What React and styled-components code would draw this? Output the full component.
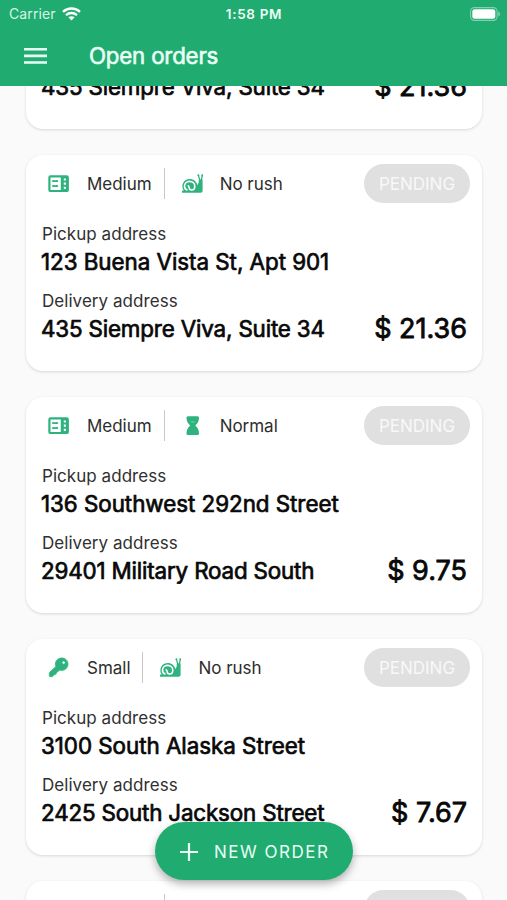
import React from "react";
import styled, { createGlobalStyle } from "styled-components";

const GlobalStyle = createGlobalStyle`
  * {
    box-sizing: border-box;
  }

  body {
    margin: 0;
    background: #fafafa;
    font-family: Inter, "Liberation Sans", sans-serif;
  }
`;

const Screen = styled.div`
  position: relative;
  display: flex;
  flex-direction: column;
  width: 100%;
  height: 900px;
  overflow: hidden;
  background: #fafafa;
`;

const Header = styled.header`
  flex: none;
  height: 86px;
  background: #20ab70;
  color: white;
`;

const StatusBar = styled.div`
  display: grid;
  grid-template-columns: 1fr auto 1fr;
  align-items: center;
  height: 27px;
  padding: 0 6px 0 9px;
`;

const Carrier = styled.div`
  display: flex;
  align-items: center;
  gap: 6px;
  font-size: 14px;
  letter-spacing: 0.1px;
  color: #d8f5e7;
`;

const Clock = styled.div`
  margin-right: 2px;
  font-size: 13.5px;
  font-weight: 600;
  letter-spacing: 0.65px;
  color: #eefff7;
`;

const Battery = styled.div`
  display: flex;
  justify-content: flex-end;
`;

const TitleBar = styled.div`
  display: flex;
  align-items: center;
  gap: 42px;
  height: 58px;
  padding-left: 24px;
`;

const Title = styled.h1`
  margin: 0;
  padding-bottom: 1px;
  line-height: 26px;
  font-size: 22.3px;
  font-weight: 400;
  letter-spacing: -0.2px;
  -webkit-text-stroke: 0.6px;
  color: #e9fff5;
`;

const ListViewport = styled.main`
  flex: 1;
  min-height: 0;
  overflow: hidden;
`;

const List = styled.div`
  display: flex;
  flex-direction: column;
  gap: 26px;
  margin-top: -173px;
  padding: 0 25px 0 26px;
`;

const Card = styled.article`
  flex: none;
  height: 216px;
  padding: 9px 12px 0 16px;
  border-radius: 17px;
  background: white;
  box-shadow: 0 1px 3px rgba(0, 0, 0, 0.14);
`;

const CardTop = styled.div`
  display: flex;
  align-items: center;
  height: 39px;
`;

const Tag = styled.div`
  display: flex;
  align-items: center;
  gap: ${(props) => (props.$divided ? "12px" : "13px")};
  padding-left: ${(props) => (props.$divided ? "12px" : "1px")};
  padding-right: 12px;
  height: 31px;
  border-left: ${(props) => (props.$divided ? "1.5px solid #c8c8c8" : "none")};
  font-size: 17px;
  letter-spacing: -0.02px;
  color: #2d2d2d;
`;

const Status = styled.div`
  display: flex;
  align-items: center;
  justify-content: center;
  width: 106px;
  height: 39px;
  margin-left: auto;
  border-radius: 20px;
  background: #e0e0e0;
  color: #f8f8f8;
  font-size: 17px;
`;

const CardBody = styled.div`
  display: flex;
  justify-content: space-between;
  align-items: flex-end;
  margin-top: 17px;
  padding-right: 3px;
`;

const Addresses = styled.div`
  display: flex;
  flex-direction: column;
  gap: 9px;
`;

const Label = styled.div`
  height: 28px;
  line-height: 28px;
  font-size: 17px;
  letter-spacing: 0.05px;
  color: #303030;
`;

const Value = styled.div`
  height: 30px;
  margin-left: -1px;
  line-height: 28px;
  font-size: 22.4px;
  font-weight: 400;
  letter-spacing: ${(props) => (props.$tight ? "-0.17px" : "-0.04px")};
  -webkit-text-stroke: 0.7px;
  color: #080808;
  white-space: nowrap;
`;

const Price = styled.div`
  line-height: 32px;
  font-size: 27px;
  font-weight: 400;
  -webkit-text-stroke: 0.8px;
  color: #080808;
  white-space: nowrap;
`;

const NewOrder = styled.button`
  position: absolute;
  left: 155px;
  bottom: 20px;
  display: flex;
  align-items: center;
  gap: 16px;
  width: 198px;
  height: 58px;
  padding: 1px 0 0 25px;
  border: 0;
  border-radius: 29px;
  background: #20ab70;
  box-shadow: 0 4px 8px rgba(0, 0, 0, 0.3);
  color: #e9fff5;
  font-family: inherit;
  font-size: 17px;
  letter-spacing: 1.5px;
  white-space: nowrap;
`;

const Icon = styled.svg`
  flex: none;
  display: block;
`;

const WifiIcon = () => (
  <Icon width="19" height="14" viewBox="0 0 19 14" fill="none" stroke="white">
    <path d="M1 4.8C5.8.4 13.2.4 18 4.8" strokeWidth="2.4" />
    <path d="M4 8.1c3.2-2.8 7.8-2.8 11 0" strokeWidth="2.3" />
    <path d="M6.4 10.3c1.900-1.500 4.300-1.500 6.200 0L9.500 13.500z" fill="white" stroke="none" />
  </Icon>
);

const BatteryIcon = () => (
  <Icon width="31" height="14" viewBox="0 0 31 14">
    <rect x=".6" y=".6" width="26.5" height="12.8" rx="3.8" fill="none" stroke="#83d1ae" strokeWidth="1.1" />
    <rect x="2.3" y="2.3" width="23" height="9.4" rx="2.3" fill="white" />
    <path d="M28.3 4.6c2.400.8 2.400 4 0 4.800z" fill="#83d1ae" />
  </Icon>
);

const MenuIcon = () => (
  <Icon width="23" height="16" viewBox="0 0 23 16" fill="#e9fff5">
    <path d="M0 0h23v2.6H0zM0 6.6h23v2.6H0zM0 13.2h23v2.6H0z" />
  </Icon>
);

const MicrowaveIcon = () => (
  <Icon width="31" height="26" viewBox="0 0 31 26">
    <path
      fill="#2fb37e"
      fillRule="evenodd"
      d="M7.5 4.3h16.2a2.2 2.2 0 0 1 2.2 2.2v12.4a2.2 2.2 0 0 1-2.2 2.2H7.5a2.2 2.2 0 0 1-2.2-2.2V6.5a2.2 2.2 0 0 1 2.2-2.2zm0 2.1V19h10.3V6.4zm13.3 1v2.1h2.1V7.4zm0 4.2v2.1h2.1v-2.1zm0 4.2v2.1h2.1v-2.1z"
    />
    <path
      d="M9.300 10.600c1.700-2 3.200.8 5.600-1.100M9.300 15.600c1.700-2 3.200.8 5.600-1.100"
      fill="none"
      stroke="#2fb37e"
      strokeWidth="1.8"
    />
  </Icon>
);

const SnailIcon = () => (
  <Icon width="31" height="26" viewBox="0 0 31 26" fill="none" stroke="#2fb37e">
    <path
      d="M5 21.800v-2.200h2.100C5.800 18.500 5.400 17 5.400 15.400c0-4.200 3.200-7.300 7.300-7.300 4 0 7 2.700 7.600 6.100l1.400-2.700V10c0-.9.500-1.400 1.400-1.400h2.500v11.200c0 1.200-.8 2-2 2z"
      fill="#2fb37e"
      stroke="none"
    />
    <path d="M22.800 9.300l-1.200-4.500M24.200 9.300l1-4.500" strokeWidth="1.3" />
    <circle cx="21.400" cy="4.300" r="1" fill="#2fb37e" stroke="none" />
    <circle cx="25.200" cy="4.300" r="1" fill="#2fb37e" stroke="none" />
    <path
      d="M10.500 19.200c-2-.5-3-2-3-3.900 0-2.900 2.200-4.900 5.100-4.900 3.100 0 5.200 2.200 5.200 4.800 0 2.300-1.300 3.800-3.100 3.800-1.700 0-2.500-1.100-2.500-2.200 0-1.100-.3-1.900-1.500-2.400"
      stroke="white"
      strokeWidth="1.6"
    />
  </Icon>
);

const HourglassIcon = () => (
  <Icon width="31" height="26" viewBox="0 0 31 26" fill="#2fb37e">
    <path d="M11.100 3.200h9.300c1.100 0 1.700.8 1.600 1.800-.3 3.500-1 4.900-3.700 7.600 2.700 2.700 3.400 4.200 3.700 7.600.1 1.100-.5 1.800-1.600 1.800h-9.300c-1.100 0-1.700-.7-1.600-1.800.3-3.400 1-4.900 3.700-7.600-2.700-2.700-3.400-4.100-3.700-7.600-.1-1 .5-1.800 1.600-1.800z" />
    <path d="M12.900 7.900h5.700c-.5.900-1.300 1.400-1.900 2.100h-1.900c-.6-.7-1.400-1.200-1.900-2.100z" fill="white" opacity=".2" />
  </Icon>
);

const KeyIcon = () => (
  <Icon width="31" height="26" viewBox="0 0 31 26" fill="#2fb37e">
    <path
      fillRule="evenodd"
      d="M18.700 3c3.600 0 6.300 2.700 6.300 6.100 0 3.600-2.800 6.300-6.300 6.300-.8 0-1.500-.1-2.200-.4l-1.500 1.700-1.400.4-.5 1.900-1.500.5-1.600 1.600c-.5.500-1 .7-1.700.7H7.700c-.9 0-1.400-.6-1.400-1.400v-1.900c0-.7.2-1.100.7-1.600l6-5.500c-.4-.7-.6-1.500-.6-2.300C12.400 5.700 15.200 3 18.700 3zm2 2.900a1.700 1.700 0 1 0 0 3.400 1.700 1.700 0 0 0 0-3.400z"
      stroke="#2fb37e"
      strokeWidth=".8"
    />
  </Icon>
);

const PlusIcon = () => (
  <Icon width="18" height="18" viewBox="0 0 18 18" stroke="#e9fff5" strokeWidth="2.2">
    <path d="M9 0v18M0 9h18" />
  </Icon>
);

const sizeIcons = { Medium: MicrowaveIcon, Small: KeyIcon };
const rushIcons = { "No rush": SnailIcon, Normal: HourglassIcon };

const orders = [
  {
    size: "Medium",
    rush: "No rush",
    pickup: "123 Buena Vista St, Apt 901",
    delivery: "435 Siempre Viva, Suite 34",
    price: "$ 21.36",
  },
  {
    size: "Medium",
    rush: "No rush",
    pickup: "123 Buena Vista St, Apt 901",
    delivery: "435 Siempre Viva, Suite 34",
    price: "$ 21.36",
  },
  {
    size: "Medium",
    rush: "Normal",
    pickup: "136 Southwest 292nd Street",
    delivery: "29401 Military Road South",
    price: "$ 9.75",
  },
  {
    size: "Small",
    rush: "No rush",
    pickup: "3100 South Alaska Street",
    delivery: "2425 South Jackson Street",
    price: "$ 7.67",
  },
  {
    size: "Medium",
    rush: "No rush",
    pickup: "",
    delivery: "",
    price: "",
  },
];

const Order = ({ order }) => {
  const SizeIcon = sizeIcons[order.size];
  const RushIcon = rushIcons[order.rush];

  return (
    <Card>
      <CardTop>
        <Tag>
          <SizeIcon />
          {order.size}
        </Tag>
        <Tag $divided>
          <RushIcon />
          {order.rush}
        </Tag>
        <Status>PENDING</Status>
      </CardTop>
      {order.pickup && (
        <CardBody>
          <Addresses>
            <div>
              <Label>Pickup address</Label>
              <Value>{order.pickup}</Value>
            </div>
            <div>
              <Label>Delivery address</Label>
              <Value $tight>{order.delivery}</Value>
            </div>
          </Addresses>
          <Price>{order.price}</Price>
        </CardBody>
      )}
    </Card>
  );
};

const App = () => {
  return (
    <Screen>
      <GlobalStyle />
      <Header>
        <StatusBar>
          <Carrier>
            Carrier
            <WifiIcon />
          </Carrier>
          <Clock>1:58 PM</Clock>
          <Battery>
            <BatteryIcon />
          </Battery>
        </StatusBar>
        <TitleBar>
          <MenuIcon />
          <Title>Open orders</Title>
        </TitleBar>
      </Header>
      <ListViewport>
        <List>
          {orders.map((order, index) => (
            <Order key={index} order={order} />
          ))}
        </List>
      </ListViewport>
      <NewOrder>
        <PlusIcon />
        NEW ORDER
      </NewOrder>
    </Screen>
  );
};

export default App;
